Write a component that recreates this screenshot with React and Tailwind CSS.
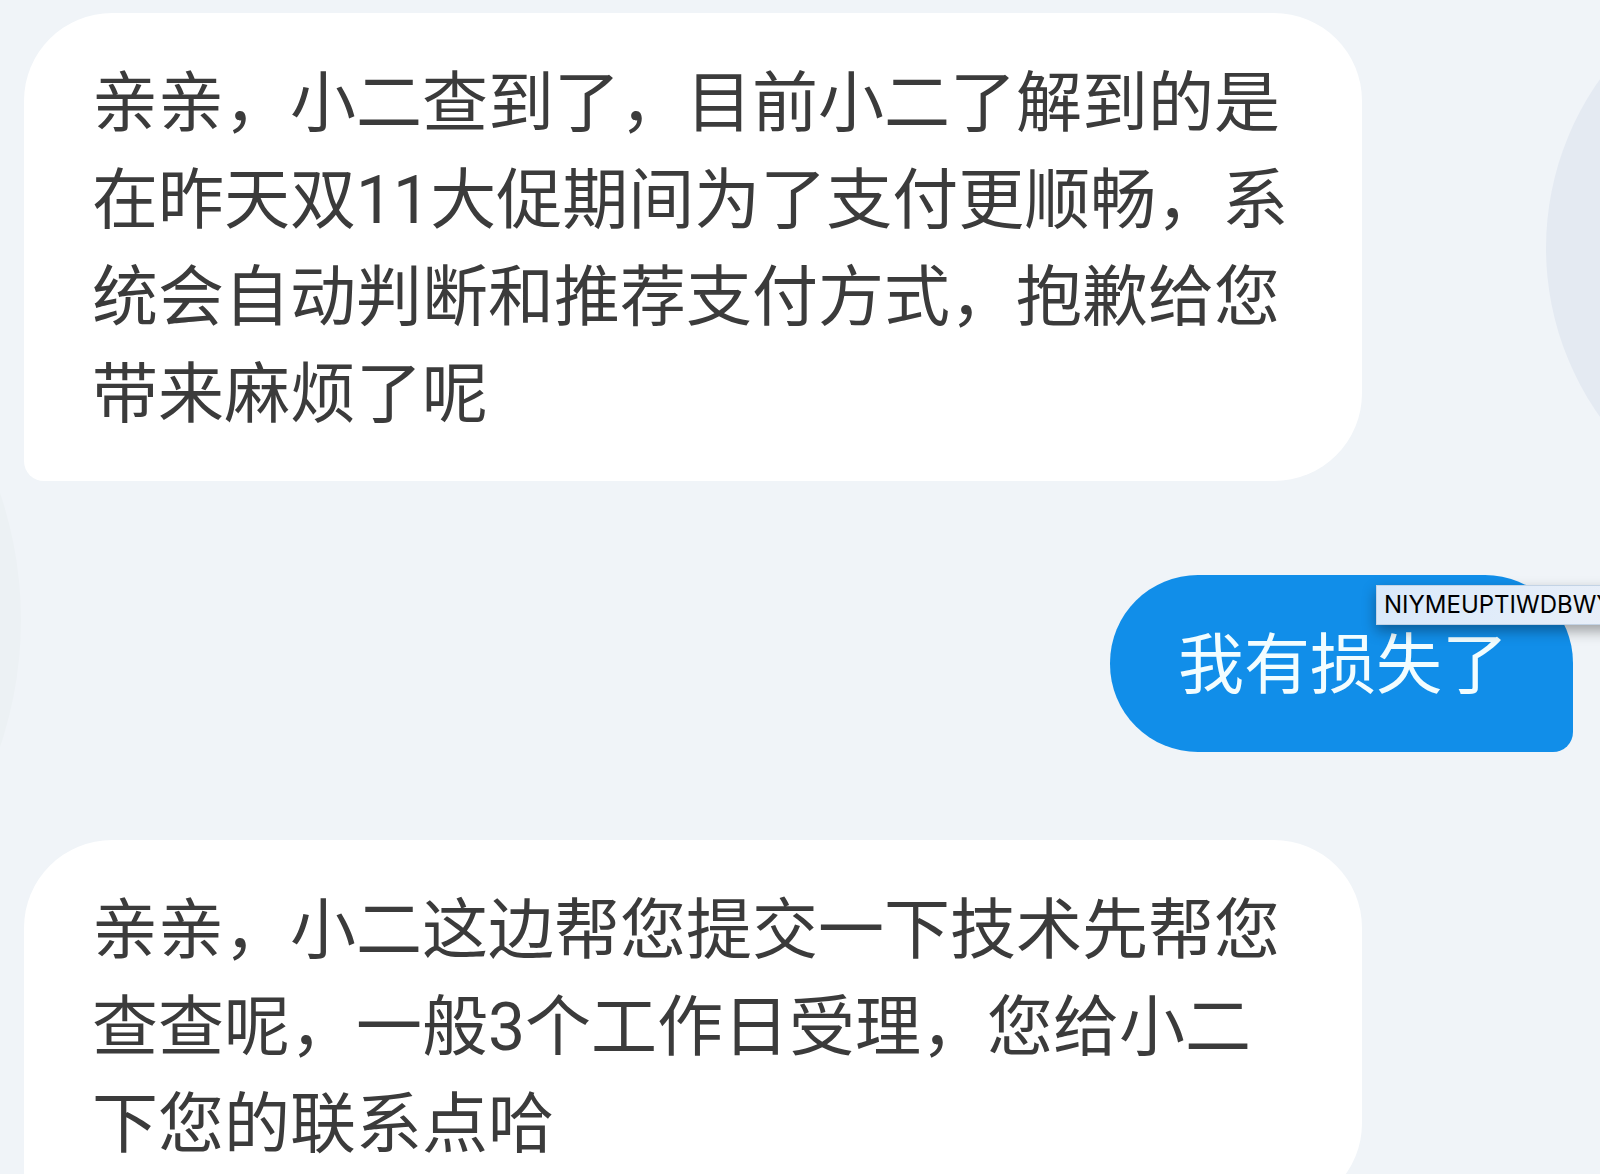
function Bubble({ children, className }) {
  return (
    <div className={"relative w-fit shrink-0 whitespace-nowrap pt-[42px] pb-[38px] pl-[68px] text-[66px] leading-[97px] " + className}>
      {children}
    </div>
  );
}

export default function App() {
  return (
    <main className="relative flex h-screen flex-col items-start overflow-hidden bg-[#f0f4f8] px-6 pt-[13px] font-['Roboto','Noto_Sans_CJK_SC',sans-serif] text-[#3b3b3b] [font-kerning:none]">
      <div className="absolute -right-[528px] -top-[43px] size-[582px] rounded-full bg-[#e4eaf2]" />
      <div className="absolute -left-[769px] top-[225px] size-[790px] rounded-full bg-[#ecf1f4]" />
      <Bubble className="rounded-[88px] rounded-bl-[20px] bg-white pr-[74px]">
        <p>亲亲，小二查到了，目前小二了解到的是</p>
        <p>在昨天双11大促期间为了支付更顺畅，系</p>
        <p>统会自动判断和推荐支付方式，抱歉给您</p>
        <p>带来麻烦了呢</p>
      </Bubble>
      <Bubble className="mt-[94px] mr-[3px] self-end rounded-[88px] rounded-br-[20px] bg-[#118ee9] pr-[65px] text-[#f2fdff]">
        <p>我有损失了</p>
        <div role="tooltip" className="absolute left-[266px] top-[10px] border border-[#c3d3e5] bg-linear-to-r from-[#d9e9fb] to-[#e9eff8] px-[7px] font-['Inter',sans-serif] text-[24px] leading-[38px] text-black shadow-[0_6px_14px_rgba(0,0,0,0.35)]">
          NIYMEUPTIWDBWY
        </div>
      </Bubble>
      <Bubble className="mt-[88px] rounded-[88px] rounded-bl-[20px] bg-white pr-[82px]">
        <p>亲亲，小二这边帮您提交一下技术先帮您</p>
        <p>查查呢，一般3个工作日受理，您给小二</p>
        <p>下您的联系点哈</p>
      </Bubble>
    </main>
  );
}
